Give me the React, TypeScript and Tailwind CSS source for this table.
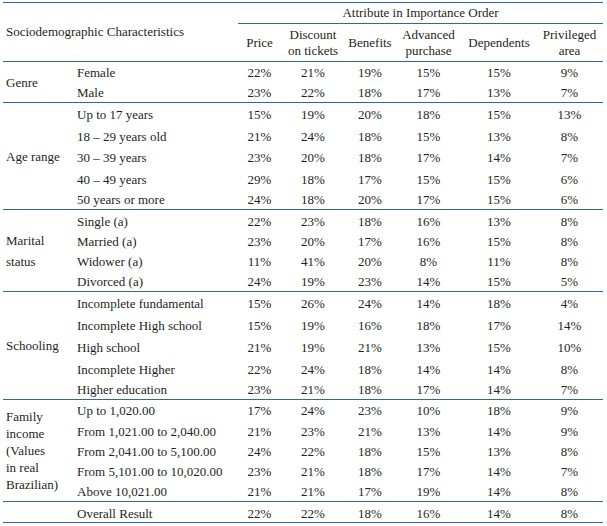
type Row = { label: string; values: string[]; h: string };
type Section = { title: React.ReactNode; key: string; titleClass: string; rows: Row[] };

const r = (label: string, values: string, h = "h-[21px]"): Row => ({ label, values: values.split(" "), h });

const sections: Section[] = [
  {
    key: "genre",
    title: "Genre",
    titleClass: "",
    rows: [r("Female", "22% 21% 19% 15% 15% 9%", "h-[20px]"), r("Male", "23% 22% 18% 17% 13% 7%")],
  },
  {
    key: "age",
    title: "Age range",
    titleClass: "",
    rows: [
      r("Up to 17 years", "15% 19% 20% 18% 15% 13%", "h-[22px]"),
      r("18 – 29 years old", "21% 24% 18% 15% 13% 8%"),
      r("30 – 39 years", "23% 20% 18% 17% 14% 7%", "h-[22px]"),
      r("40 – 49 years", "29% 18% 17% 15% 15% 6%"),
      r("50 years or more", "24% 18% 20% 17% 15% 6%"),
    ],
  },
  {
    key: "marital",
    title: (
      <>
        Marital
        <br />
        status
      </>
    ),
    titleClass: "leading-[21px]",
    rows: [
      r("Single (a)", "22% 23% 18% 16% 13% 8%"),
      r("Married (a)", "23% 20% 17% 16% 15% 8%", "h-[20px]"),
      r("Widower (a)", "11% 41% 20% 8% 11% 8%", "h-[20px]"),
      r("Divorced (a)", "24% 19% 23% 14% 15% 5%"),
    ],
  },
  {
    key: "schooling",
    title: "Schooling",
    titleClass: "",
    rows: [
      r("Incomplete fundamental", "15% 26% 24% 14% 18% 4%", "h-[22px]"),
      r("Incomplete High school", "15% 19% 16% 18% 17% 14%", "h-[22px]"),
      r("High school", "21% 19% 21% 13% 15% 10%", "h-[22px]"),
      r("Incomplete Higher", "22% 24% 18% 14% 14% 8%"),
      r("Higher education", "23% 21% 18% 17% 14% 7%"),
    ],
  },
  {
    key: "income",
    title: (
      <>
        Family
        <br />
        income
        <br />
        (Values
        <br />
        in real
        <br />
        Brazilian)
      </>
    ),
    titleClass: "leading-[17px]",
    rows: [
      r("Up to 1,020.00", "17% 24% 23% 10% 18% 9%", "h-[20px]"),
      r("From 1,021.00 to 2,040.00", "21% 23% 21% 13% 14% 9%"),
      r("From 2,041.00 to 5,100.00", "24% 22% 18% 15% 13% 8%", "h-[20px]"),
      r("From 5,101.00 to 10,020.00", "23% 21% 18% 17% 14% 7%", "h-[20px]"),
      r("Above 10,021.00", "21% 21% 17% 19% 14% 8%"),
    ],
  },
];

const line = "border-[#2d68a6]";

export default function App() {
  return (
    <div className="w-[607px] h-[526px] bg-white pt-[2px] pl-[3px] text-[13px] text-[#231f20] font-['Liberation_Serif',serif]">
      <table className="w-[600px] border-collapse table-fixed">
        <colgroup>
          <col className="w-[69px]" />
          <col className="w-[166px]" />
          <col className="w-[43px]" />
          <col className="w-[64px]" />
          <col className="w-[50px]" />
          <col className="w-[67px]" />
          <col className="w-[74px]" />
          <col className="w-[67px]" />
        </colgroup>
        <thead>
          <tr className={`h-[21px] border-t ${line}`}>
            <th colSpan={2} rowSpan={2} className={`text-left font-normal pl-[3px] align-middle border-b ${line}`}>
              Sociodemographic Characteristics
            </th>
            <th colSpan={6} className={`font-normal text-center border-b ${line}`}>
              Attribute in Importance Order
            </th>
          </tr>
          <tr className={`h-[38px] leading-[16px] border-b ${line}`}>
            <th className="font-normal">Price</th>
            <th className="font-normal">
              Discount
              <br />
              on tickets
            </th>
            <th className="font-normal">Benefits</th>
            <th className="font-normal">
              Advanced
              <br />
              purchase
            </th>
            <th className="font-normal">Dependents</th>
            <th className="font-normal">
              Privileged
              <br />
              area
            </th>
          </tr>
        </thead>
        <tbody>
          {sections.map((s) =>
            s.rows.map((row, i) => (
              <tr
                key={s.key + row.label}
                className={`${row.h} leading-none ${i === s.rows.length - 1 ? `border-b ${line}` : ""}`}
              >
                {i === 0 && (
                  <td rowSpan={s.rows.length} className={`pl-[3px] align-middle ${s.titleClass}`}>
                    {s.title}
                  </td>
                )}
                <td className="pl-[5px] pt-[2px]">{row.label}</td>
                {row.values.map((v, j) => (
                  <td key={j} className="text-center pt-[2px]">
                    {v}
                  </td>
                ))}
              </tr>
            ))
          )}
          <tr className={`h-[21px] leading-none border-b ${line}`}>
            <td />
            <td className="pl-[5px] pt-[2px]">Overall Result</td>
            {"22% 22% 18% 16% 14% 8%".split(" ").map((v, j) => (
              <td key={j} className="text-center pt-[2px]">
                {v}
              </td>
            ))}
          </tr>
        </tbody>
      </table>
    </div>
  );
}
